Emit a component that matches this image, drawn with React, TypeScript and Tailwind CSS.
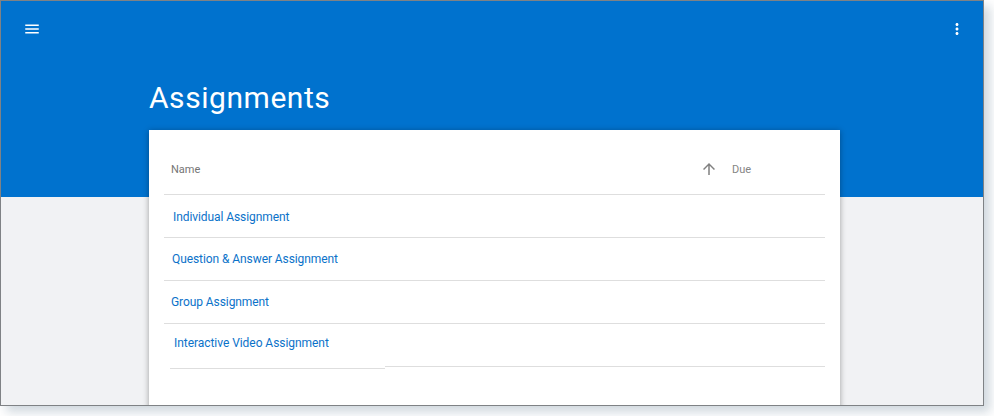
export default function App() {
  const rows = [
    { t: "Individual Assignment", pl: "pl-[9px]", h: "h-[43px]", pt: "pt-[14px]" },
    { t: "Question & Answer Assignment", pl: "pl-[8px]", h: "h-[43px]", pt: "pt-[13px]" },
    { t: "Group Assignment", pl: "pl-[7px]", h: "h-[43px]", pt: "pt-[13px]" },
  ];
  return (
    <div className="w-[994px] h-[416px] bg-white font-['Roboto',sans-serif] overflow-hidden">
      <div className="w-[984px] h-[406px] border border-[#7f8285] bg-[#f1f2f4] overflow-hidden shadow-[6px_6px_10px_rgba(100,125,145,0.3)]">
        <div className="h-[196px] bg-[#0072ce] flex flex-col">
          <div className="flex justify-between items-center h-[56px] pl-[22px] pr-[17px]">
            <svg width="18" height="18" viewBox="0 0 24 24" fill="#fff">
              <path d="M3 18h18v-2H3v2zm0-5h18v-2H3v2zm0-7v2h18V6H3z" />
            </svg>
            <svg width="18" height="18" viewBox="0 0 24 24" fill="#fff">
              <path d="M12 8c1.1 0 2-.9 2-2s-.9-2-2-2-2 .9-2 2 .9 2 2 2zm0 2c-1.1 0-2 .9-2 2s.9 2 2 2 2-.9 2-2-.9-2-2-2zm0 6c-1.1 0-2 .9-2 2s.9 2 2 2 2-.9 2-2-.9-2-2-2z" />
            </svg>
          </div>
          <h1 className="ml-[148px] mt-[21px] text-[30px] leading-[40px] tracking-[0.55px] text-white font-normal">Assignments</h1>
        </div>
        <div className="ml-[148px] -mt-[67px] w-[691px] h-[300px] bg-white shadow-[0_1px_6px_rgba(0,0,0,0.35)] relative pt-[1px]">
          <div className="ml-[15px] w-[661px] h-[64px] pt-[16px] border-b border-[#dedede] flex items-center text-[11px] text-[#757575]">
            <span className="ml-[7px] w-[529px]">Name</span>
            <svg className="mb-[3px]" width="18" height="18" viewBox="0 0 24 24" fill="#808080">
              <path d="M4 12l1.41 1.41L11 7.83V20h2V7.83l5.58 5.59L20 12l-8-8-8 8z" />
            </svg>
            <span className="ml-[14px] text-[#858585]">Due</span>
          </div>
          {rows.map((r) => (
            <div key={r.t} className={`ml-[15px] w-[661px] ${r.h} ${r.pl} ${r.pt} border-b border-[#dedede] text-[12px] leading-[16px] tracking-[-0.08px] text-[#0b72c9]`}>
              {r.t}
            </div>
          ))}
          <div className="flex items-start">
            <div className="ml-[21px] w-[215px] h-[45px] border-b border-[#dedede] pl-[4px] pt-[11px] text-[12px] leading-[16px] tracking-[-0.05px] text-[#0b72c9]">
              Interactive Video Assignment
            </div>
            <div className="w-[440px] h-[43px] border-b border-[#dedede]" />
          </div>
        </div>
      </div>
    </div>
  );
}
